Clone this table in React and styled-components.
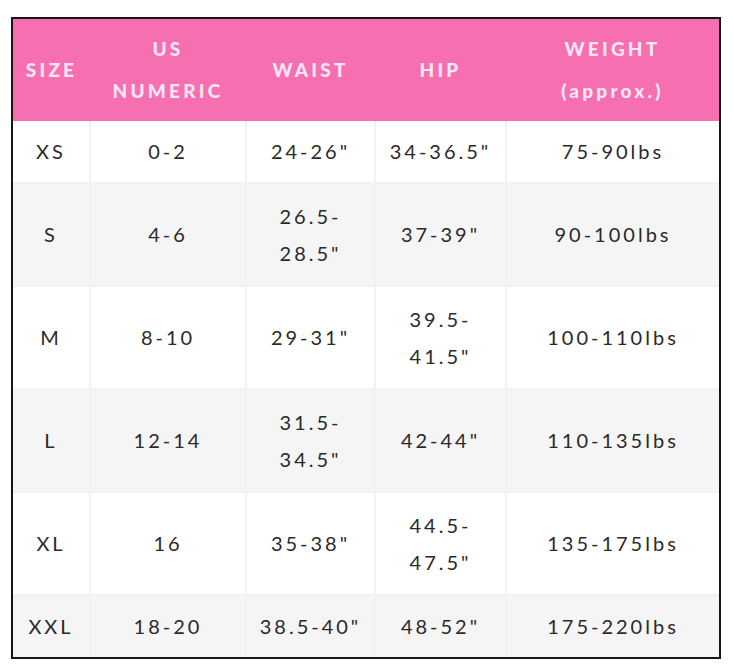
import React from 'react'
import styled, { createGlobalStyle } from 'styled-components'

const GlobalStyle = createGlobalStyle`
  html, body {
    margin: 0;
    padding: 0;
    background: #ffffff;
  }
`

const Page = styled.div`
  padding: 17px 13px 11px 11px;
  width: 734px;
  box-sizing: border-box;
`

const Frame = styled.div`
  border: 2px solid #161616;
  width: 710px;
  box-sizing: border-box;
`

const Table = styled.table`
  width: 100%;
  border-collapse: collapse;
  table-layout: fixed;
  font-family: Lato, 'Liberation Sans', sans-serif;
`

const HeadCell = styled.th`
  background: #f56fb1;
  color: #fde6f2;
  font-size: 19px;
  font-weight: 900;
  letter-spacing: 3.2px;
  line-height: 42px;
  padding: 9px 2px;
  text-align: center;
  white-space: pre-line;
`

const Row = styled.tr`
  background: ${(props) => (props.shaded ? '#f5f5f5' : '#ffffff')};
`

const Cell = styled.td`
  border: 2px solid #f2f2f2;
  border-top: ${(props) => (props.first ? 'none' : '2px solid #f2f2f2')};
  border-bottom: ${(props) => (props.last ? 'none' : '2px solid #f2f2f2')};
  color: #2a2a2a;
  font-size: 20px;
  font-weight: 400;
  letter-spacing: 3px;
  line-height: 37px;
  padding: ${(props) => (props.tall ? '13.5px 2px' : '12px 2px')};
  text-align: center;
  white-space: pre-line;

  &:first-child {
    border-left: none;
  }
  &:last-child {
    border-right: none;
  }
`

const columns = [
  { title: 'SIZE', width: 77 },
  { title: 'US\nNUMERIC', width: 156 },
  { title: 'WAIST', width: 129 },
  { title: 'HIP', width: 131 },
  { title: 'WEIGHT\n(approx.)', width: 213 },
]

const rows = [
  ['XS', '0-2', '24-26"', '34-36.5"', '75-90lbs'],
  ['S', '4-6', '26.5-\n28.5"', '37-39"', '90-100lbs'],
  ['M', '8-10', '29-31"', '39.5-\n41.5"', '100-110lbs'],
  ['L', '12-14', '31.5-\n34.5"', '42-44"', '110-135lbs'],
  ['XL', '16', '35-38"', '44.5-\n47.5"', '135-175lbs'],
  ['XXL', '18-20', '38.5-40"', '48-52"', '175-220lbs'],
]

const App = () => {
  return (
    <Page>
      <GlobalStyle />
      <Frame>
        <Table>
          <colgroup>
            {columns.map((c) => (
              <col key={c.title} style={{ width: c.width }} />
            ))}
          </colgroup>
          <thead>
            <tr>
              {columns.map((c) => (
                <HeadCell key={c.title}>{c.title}</HeadCell>
              ))}
            </tr>
          </thead>
          <tbody>
            {rows.map((r, i) => {
              const tall = r.some((v) => v.includes('\n'))
              return (
                <Row key={r[0]} shaded={i % 2 === 1}>
                  {r.map((v, j) => (
                    <Cell
                      key={j}
                      tall={tall}
                      first={i === 0}
                      last={i === rows.length - 1}
                    >
                      {v}
                    </Cell>
                  ))}
                </Row>
              )
            })}
          </tbody>
        </Table>
      </Frame>
    </Page>
  )
}

export default App
